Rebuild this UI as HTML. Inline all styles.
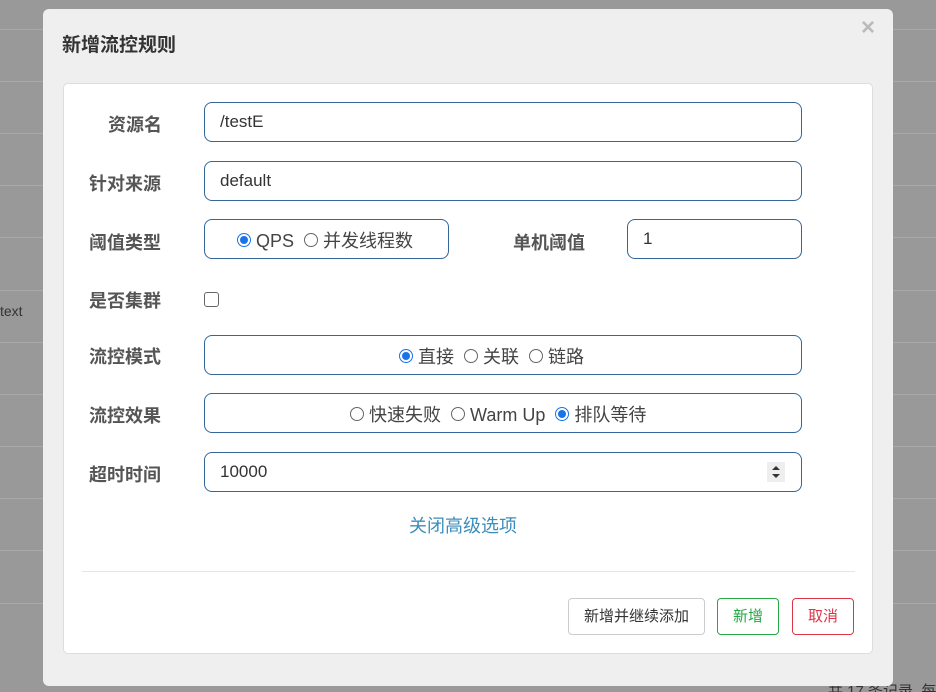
<!DOCTYPE html>
<html><head><meta charset="utf-8"><style>
*{box-sizing:border-box;margin:0;padding:0}
html,body{width:936px;height:692px;overflow:hidden}
body{background:#999;position:relative;font-family:"Liberation Sans","Noto Sans CJK SC",sans-serif;color:#333}
.l{position:absolute;left:0;width:936px;height:1px;background:#a9a9a9}
.a{position:absolute;white-space:nowrap}
.dlg{position:absolute;left:43px;top:9px;width:850px;height:677px;background:#efefef;border-radius:6px}
.card{position:absolute;left:63px;top:83px;width:810px;height:571px;background:#fff;border:1px solid #ddd;border-radius:5px}
.lab{position:absolute;font-size:18px;font-weight:bold;color:#555;line-height:24px;white-space:nowrap}
.in{position:absolute;border:1px solid #336699;border-radius:8px;height:40px;font-size:17px;color:#333;line-height:38px;padding-left:15px;background:#fff;white-space:nowrap}
.in.r{font-size:18px;line-height:42px;color:#444}
.rd{display:inline-block;width:14px;height:14px;border:1px solid #666;border-radius:50%;vertical-align:0px;margin-right:5px;position:relative}
.rd.on{border:1px solid #1a73e8;background:#fff}
.rd.on:after{content:"";position:absolute;left:2px;top:2px;width:8px;height:8px;border-radius:50%;background:#1a73e8}
.btn{position:absolute;top:598px;height:37px;border-radius:4px;font-size:15px;line-height:35px;text-align:center;background:#fff;white-space:nowrap}
</style></head><body>
<div class="l" style="top:29px"></div><div class="l" style="top:81px"></div><div class="l" style="top:133px"></div><div class="l" style="top:185px"></div><div class="l" style="top:237px"></div><div class="l" style="top:290px"></div><div class="l" style="top:342px"></div><div class="l" style="top:394px"></div><div class="l" style="top:446px"></div><div class="l" style="top:498px"></div><div class="l" style="top:550px"></div><div class="l" style="top:603px"></div>
<div class="a" style="left:0;top:303px;font-size:14px;color:#333">text</div>
<div class="a" style="left:828px;top:680px;font-size:15px;color:#333">共 17 条记录, 每</div>
<div class="dlg"></div>
<div class="a" style="left:62px;top:30px;font-size:19px;font-weight:bold;color:#333">新增流控规则</div>
<div class="a" style="left:861px;top:14px;font-size:24px;font-weight:bold;color:#bbb">×</div>
<div class="card"></div>
<div class="lab" style="left:108px;top:113px">资源名</div>
<div class="in" style="left:204px;top:102px;width:598px">/testE</div>
<div class="lab" style="left:89px;top:172px">针对来源</div>
<div class="in" style="left:204px;top:161px;width:598px">default</div>
<div class="lab" style="left:89px;top:231px">阈值类型</div>
<div class="in r" style="left:204px;top:219px;width:245px;padding-left:32px"><span class="rd on"></span>QPS&nbsp;&nbsp;<span class="rd"></span>并发线程数</div>
<div class="lab" style="left:513px;top:231px">单机阈值</div>
<div class="in" style="left:627px;top:219px;width:175px">1</div>
<div class="lab" style="left:89px;top:289px">是否集群</div>
<div class="a" style="left:204px;top:292px;width:15px;height:15px;border:1px solid #666;border-radius:3px"></div>
<div class="lab" style="left:89px;top:345px">流控模式</div>
<div class="in r" style="left:204px;top:335px;width:598px;padding-left:194px"><span class="rd on"></span>直接&nbsp;&nbsp;<span class="rd"></span>关联&nbsp;&nbsp;<span class="rd"></span>链路</div>
<div class="lab" style="left:89px;top:404px">流控效果</div>
<div class="in r" style="left:204px;top:393px;width:598px;padding-left:145px"><span class="rd"></span>快速失败&nbsp;&nbsp;<span class="rd"></span>Warm Up&nbsp;&nbsp;<span class="rd on"></span>排队等待</div>
<div class="lab" style="left:89px;top:463px">超时时间</div>
<div class="in" style="left:204px;top:452px;width:598px">10000</div>
<div class="a" style="left:767px;top:462px;width:18px;height:20px;background:#eee"><svg width="18" height="20"><path d="M5 8 L9 4 L13 8Z M5 12 L9 16 L13 12Z" fill="#333"/></svg></div>
<div class="a" style="left:409px;top:512px;font-size:18px;color:#3c8dbc">关闭高级选项</div>
<div class="a" style="left:82px;top:571px;width:773px;height:1px;background:#e5e5e5"></div>
<div class="btn" style="left:568px;width:137px;border:1px solid #ccc;color:#333">新增并继续添加</div>
<div class="btn" style="left:717px;width:62px;border:1px solid #28a745;color:#28a745">新增</div>
<div class="btn" style="left:792px;width:62px;border:1px solid #dc3545;color:#dc3545">取消</div>
</body></html>
